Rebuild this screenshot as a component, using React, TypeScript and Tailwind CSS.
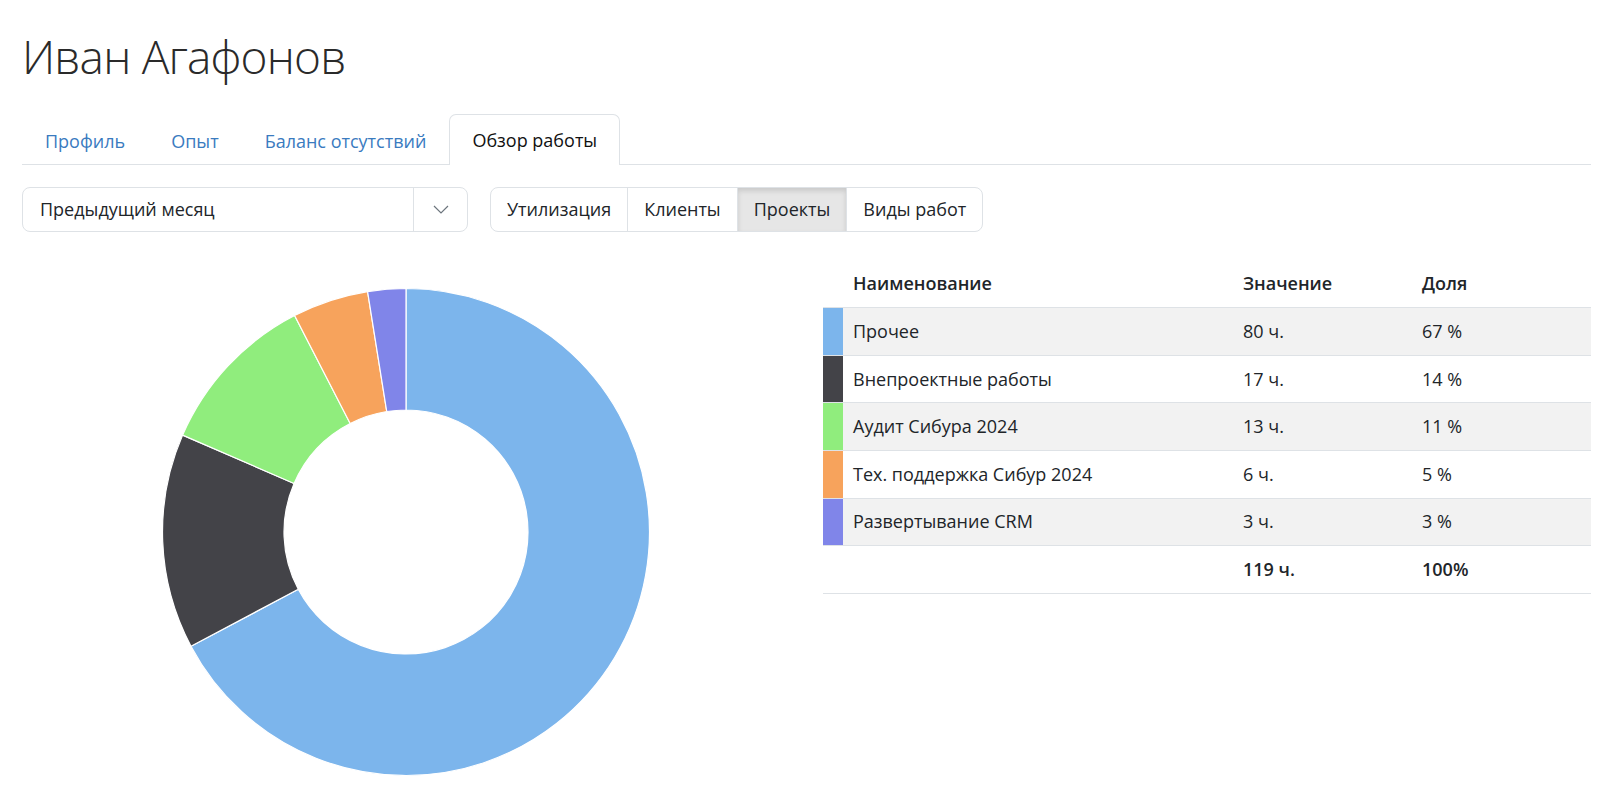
import React from 'react'

interface Slice {
    name: string,
    hours: number,
    share: string,
    color: string,
}

const slices: Slice[] = [
    { name: 'Прочее', hours: 80, share: '67 %', color: '#7cb5ec' },
    { name: 'Внепроектные работы', hours: 17, share: '14 %', color: '#434348' },
    { name: 'Аудит Сибура 2024', hours: 13, share: '11 %', color: '#90ed7d' },
    { name: 'Тех. поддержка Сибур 2024', hours: 6, share: '5 %', color: '#f7a35c' },
    { name: 'Развертывание CRM', hours: 3, share: '3 %', color: '#8085e9' },
]

const tabs = ['Профиль', 'Опыт', 'Баланс отсутствий', 'Обзор работы']
const modes = ['Утилизация', 'Клиенты', 'Проекты', 'Виды работ']

// donut slice path, angles in radians from the top, clockwise
const slicePath = (cx: number, cy: number, r: number, R: number, a0: number, a1: number) => {
    const p = (rad: number, a: number) => [cx + rad * Math.sin(a), cy - rad * Math.cos(a)]
    const large = a1 - a0 > Math.PI ? 1 : 0
    const [x0, y0] = p(R, a0)
    const [x1, y1] = p(R, a1)
    const [x2, y2] = p(r, a1)
    const [x3, y3] = p(r, a0)
    return `M${x0} ${y0} A${R} ${R} 0 ${large} 1 ${x1} ${y1} L${x2} ${y2} A${r} ${r} 0 ${large} 0 ${x3} ${y3} Z`
}

const Donut = () => {
    const total = slices.reduce((s, i) => s + i.hours, 0)
    let start = 0
    return (
        <svg width="768" height="532" viewBox="0 0 768 532">
            {slices.map((item) => {
                const end = start + (item.hours / total) * Math.PI * 2
                const d = slicePath(384, 272, 122, 243.5, start, end)
                start = end
                return <path key={item.name} d={d} fill={item.color} stroke="#ffffff" strokeWidth={1.2} />
            })}
        </svg>
    )
}

const App = () => {
    return (
        <div className="min-h-[792px] bg-white text-[#212529] font-['Open_Sans','Noto_Sans',sans-serif] pl-[22px] pr-[11px]">
            <h1 className="pt-[29px] text-[46px] leading-[1.2] font-light text-[#2a2a2a] tracking-[-0.8px]">Иван Агафонов</h1>

            {/* tabs */}
            <div className="mt-[30px] flex border-b border-[#dee2e6]">
                {tabs.map((t, i) => {
                    const active = i === tabs.length - 1
                    return (
                        <div
                            key={t}
                            className={active
                                ? 'h-[51px] -mb-px px-[22px] pt-[12px] border border-b-0 border-[#dee2e6] rounded-t-[7px] bg-white text-[18px] leading-[27px] text-[#111]'
                                : 'h-[50px] px-[22px] pt-[13px] border border-transparent text-[18px] leading-[27px] text-[#3a7bbf]'}
                        >
                            {t}
                        </div>
                    )
                })}
            </div>

            {/* filters */}
            <div className="mt-[22px] flex gap-[22px]">
                <div className="w-[446px] h-[45px] flex border border-[#dee2e6] rounded-[8px]">
                    <div className="flex-1 flex items-center pl-[17px] text-[18px]">Предыдущий месяц</div>
                    <div className="w-[54px] flex items-center justify-center border-l border-[#dee2e6]">
                        <svg width="16" height="9" viewBox="0 0 16 9" fill="none" stroke="#6c757d" strokeWidth="1.2">
                            <path d="M1 1l7 7 7-7" />
                        </svg>
                    </div>
                </div>
                <div className="h-[45px] flex border border-[#dee2e6] rounded-[8px] overflow-hidden">
                    {modes.map((m, i) => (
                        <div
                            key={m}
                            className={`flex items-center px-[16px] text-[18px] ${i > 0 ? 'border-l border-[#dee2e6]' : ''} ${m === 'Проекты' ? 'bg-[#e6e6e6] shadow-[inset_0_3px_5px_rgba(0,0,0,0.125)]' : ''}`}
                        >
                            {m}
                        </div>
                    ))}
                </div>
            </div>

            {/* chart and table */}
            <div className="mt-[28px] grid grid-cols-2 gap-[33px]">
                <div>
                    <Donut />
                </div>
                <div className="text-[18px]">
                    <div className="grid grid-cols-[20px_390px_179px_1fr] h-[48px] border-b border-[#dee2e6] font-semibold items-center">
                        <div />
                        <div className="pl-[10px]">Наименование</div>
                        <div className="pl-[10px]">Значение</div>
                        <div className="pl-[10px]">Доля</div>
                    </div>
                    {slices.map((item, index) => (
                        <div
                            key={item.name}
                            className={`grid grid-cols-[20px_390px_179px_1fr] h-[47.6px] border-b border-[#dee2e6] ${index % 2 === 0 ? 'bg-[#f2f2f2]' : 'bg-white'}`}
                        >
                            <div style={{ backgroundColor: item.color }} />
                            <div className="pl-[10px] flex items-center">{item.name}</div>
                            <div className="pl-[10px] flex items-center">{item.hours} ч.</div>
                            <div className="pl-[10px] flex items-center">{item.share}</div>
                        </div>
                    ))}
                    <div className="grid grid-cols-[20px_390px_179px_1fr] h-[48px] border-b border-[#dee2e6] font-semibold items-center">
                        <div />
                        <div />
                        <div className="pl-[10px]">119 ч.</div>
                        <div className="pl-[10px]">100%</div>
                    </div>
                </div>
            </div>
        </div>
    )
}

export default App
